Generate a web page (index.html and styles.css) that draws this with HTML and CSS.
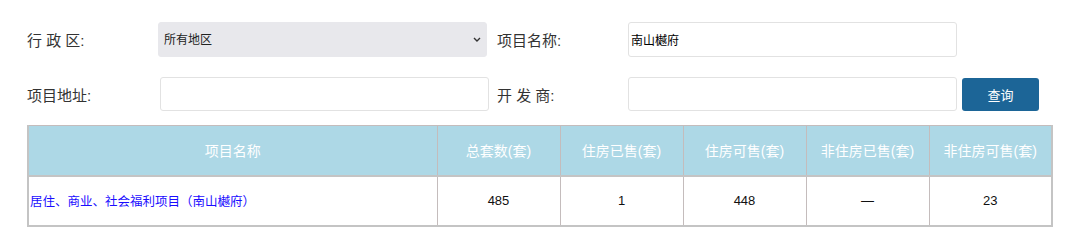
FILE: index.html
```html
<!DOCTYPE html>
<html lang="zh-CN">
<head>
  <meta charset="UTF-8">
  <title>项目查询</title>
  <link rel="stylesheet" href="styles.css">
</head>
<body>
  <div class="search">
    <div class="search-row">
      <label class="label">行 政 区:</label>
      <div class="select-wrap">
        <select class="field select">
          <option>所有地区</option>
        </select>
        <svg class="chevron" width="8" height="5" viewBox="0 0 8 5">
          <path d="M1 1 L4 4 L7 1" fill="none" stroke="#333" stroke-width="1.4"/>
        </svg>
      </div>
      <label class="label label-right">项目名称:</label>
      <input class="field" type="text" value="南山樾府">
    </div>
    <div class="search-row">
      <label class="label label-wide">项目地址:</label>
      <input class="field" type="text">
      <label class="label label-right">开 发 商:</label>
      <input class="field" type="text">
      <button class="btn-query">查询</button>
    </div>
  </div>

  <table class="result">
    <thead>
      <tr>
        <th class="col-name">项目名称</th>
        <th>总套数(套)</th>
        <th>住房已售(套)</th>
        <th>住房可售(套)</th>
        <th>非住房已售(套)</th>
        <th>非住房可售(套)</th>
      </tr>
    </thead>
    <tbody>
      <tr>
        <td class="col-name"><a href="#">居住、商业、社会福利项目（南山樾府）</a></td>
        <td>485</td>
        <td>1</td>
        <td>448</td>
        <td>—</td>
        <td>23</td>
      </tr>
    </tbody>
  </table>
</body>
</html>
```

FILE: styles.css
```css
* {
  box-sizing: border-box;
  margin: 0;
  padding: 0;
  font-family: 'Liberation Sans', 'Noto Sans CJK SC', sans-serif;
}

body {
  background: #fff;
  color: #333;
  padding: 22px 0 0 27px;
}

.search-row {
  display: flex;
  align-items: center;
  margin-bottom: 20px;
}

.search-row:last-child {
  margin-bottom: 14px;
}

.label {
  width: 131px;
  font-size: 15px;
  color: #333;
}

.label-wide {
  width: 133px;
}

.label-right {
  margin-left: 10px;
}

.search-row:last-child .label-right {
  margin-left: 8px;
}

.field {
  width: 329px;
  height: 35px;
  border: 1px solid #e2e2e2;
  border-radius: 3px;
  background: #fff;
  padding: 0 2px;
  font-size: 12px;
  color: #000;
  outline: none;
}

.search-row:last-child .field {
  height: 34px;
}

.select-wrap {
  position: relative;
  display: flex;
}

.select {
  -webkit-appearance: none;
  appearance: none;
  background: #e8e8ec;
  border-color: #e8e8ec;
  padding: 0 5px;
  color: #222;
}

.chevron {
  position: absolute;
  right: 6px;
  top: 15px;
  pointer-events: none;
}

.btn-query {
  width: 77px;
  height: 33px;
  margin-left: 5px;
  border: none;
  border-radius: 3px;
  background: #1c6597;
  color: #fff;
  font-size: 13px;
  cursor: pointer;
}

.result {
  width: 1023px;
  table-layout: fixed;
  border-collapse: collapse;
  border: 2px solid #c4c4c4;
  border-top-width: 1px;
}

.result th,
.result td {
  width: 123px;
  height: 50px;
  border: 1px solid #c4bcbc;
  text-align: center;
  font-size: 14px;
}

.result th {
  background: #add8e6;
  color: #fff;
  font-weight: normal;
  border-bottom: 2px solid #c4c4c4;
}

.result td {
  color: #111;
  font-size: 13px;
}

.result .col-name {
  width: 409px;
}

.result td.col-name {
  text-align: left;
  padding-left: 1px;
}

.result a {
  color: #1a0dff;
  text-decoration: none;
  font-size: 12.5px;
}
```
